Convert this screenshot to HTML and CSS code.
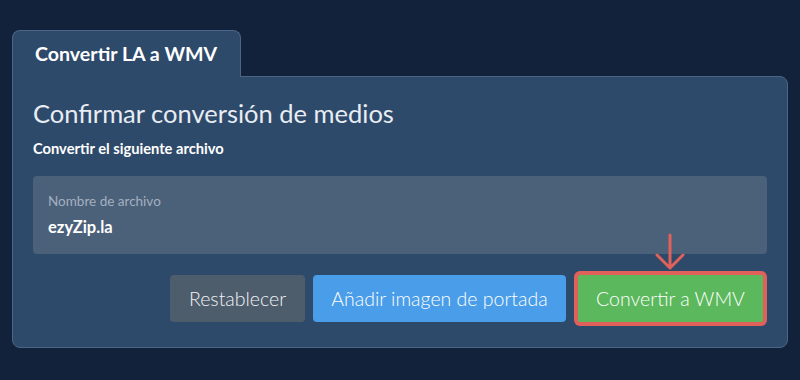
FILE: index.html
```html
<!DOCTYPE html>
<html lang="es">
<head>
    <meta charset="UTF-8">
    <meta name="viewport" content="width=device-width, initial-scale=1.0">
    <title>Convertir LA a WMV</title>
    <link rel="stylesheet" href="styles.css">
</head>
<body>

    <div class="container">
        <div class="tab">Convertir LA a WMV</div>

        <div class="panel">
            <h1>Confirmar conversión de medios</h1>
            <p class="subtitle">Convertir el siguiente archivo</p>

            <div class="file-box">
                <div class="file-label">Nombre de archivo</div>
                <div class="file-name">ezyZip.la</div>
            </div>

            <div class="actions">
                <button class="btn btn-reset">Restablecer</button>
                <button class="btn btn-cover">Añadir imagen de portada</button>
                <div class="convert-wrap">
                    <!-- Flecha que apunta al botón -->
                    <svg class="arrow" width="30" height="38" viewBox="0 0 30 38">
                        <path d="M15 2 V35 M2 22 L15 35 L28 22" fill="none" stroke="#e0605a" stroke-width="3" stroke-linecap="round" stroke-linejoin="round"/>
                    </svg>
                    <button class="btn btn-convert">Convertir a WMV</button>
                </div>
            </div>
        </div>
    </div>

</body>
</html>
```

FILE: styles.css
```css
body {
    font-family: 'Lato', 'Liberation Sans', sans-serif;
    background-color: #11223a;
    color: white;
    margin: 0;
    padding: 0;
}

.container {
    padding: 30px 12px 0 12px;
}

.tab {
    display: inline-block;
    position: relative;
    z-index: 1;
    background-color: #2e4a6b;
    border: 1px solid #4c6586;
    border-bottom: none;
    border-radius: 8px 8px 0 0;
    padding: 14px 23px 14px 22px;
    margin-bottom: -1px;
    font-size: 19.6px;
    font-weight: bold;
    line-height: 18px;
}

.panel {
    background-color: #2e4a6b;
    border: 1px solid #4c6586;
    border-radius: 0 8px 8px 8px;
    padding: 18px 20px 21px 20px;
}

.panel h1 {
    margin: 0;
    font-size: 25.5px;
    font-weight: normal;
    line-height: 36px;
    color: #e8edf3;
}

.subtitle {
    margin: 8px 0 0 0;
    font-size: 14.7px;
    font-weight: bold;
    line-height: 18px;
}

.file-box {
    margin-top: 19px;
    background-color: #4b6079;
    border-radius: 4px;
    padding: 17px 15px 18px 15px;
}

.file-label {
    font-size: 13.5px;
    color: #a3b0c0;
    line-height: 16px;
}

.file-name {
    margin-top: 10px;
    font-size: 16.5px;
    font-weight: bold;
    line-height: 17px;
}

.actions {
    display: flex;
    justify-content: flex-end;
    align-items: center;
    gap: 8px;
    margin-top: 17px;
}

.btn {
    font-family: inherit;
    font-size: 19.5px;
    font-weight: 300;
    color: white;
    border: none;
    border-radius: 4px;
    height: 47px;
    padding: 0 16px;
    cursor: pointer;
}

.btn-reset {
    background-color: #4e5d6c;
    color: #f0f2f5;
    width: 135px;
    padding: 0;
}

.btn-cover {
    background-color: #4a9de8;
    width: 253px;
    padding: 0;
}

.convert-wrap {
    position: relative;
    padding: 4px;
    background-color: #e0605a;
    border-radius: 6px;
}

.btn-convert {
    display: block;
    background-color: #5cb85c;
    border-radius: 2px;
    width: 185px;
    padding: 0;
}

.arrow {
    position: absolute;
    left: 81px;
    top: -38px;
}
```
